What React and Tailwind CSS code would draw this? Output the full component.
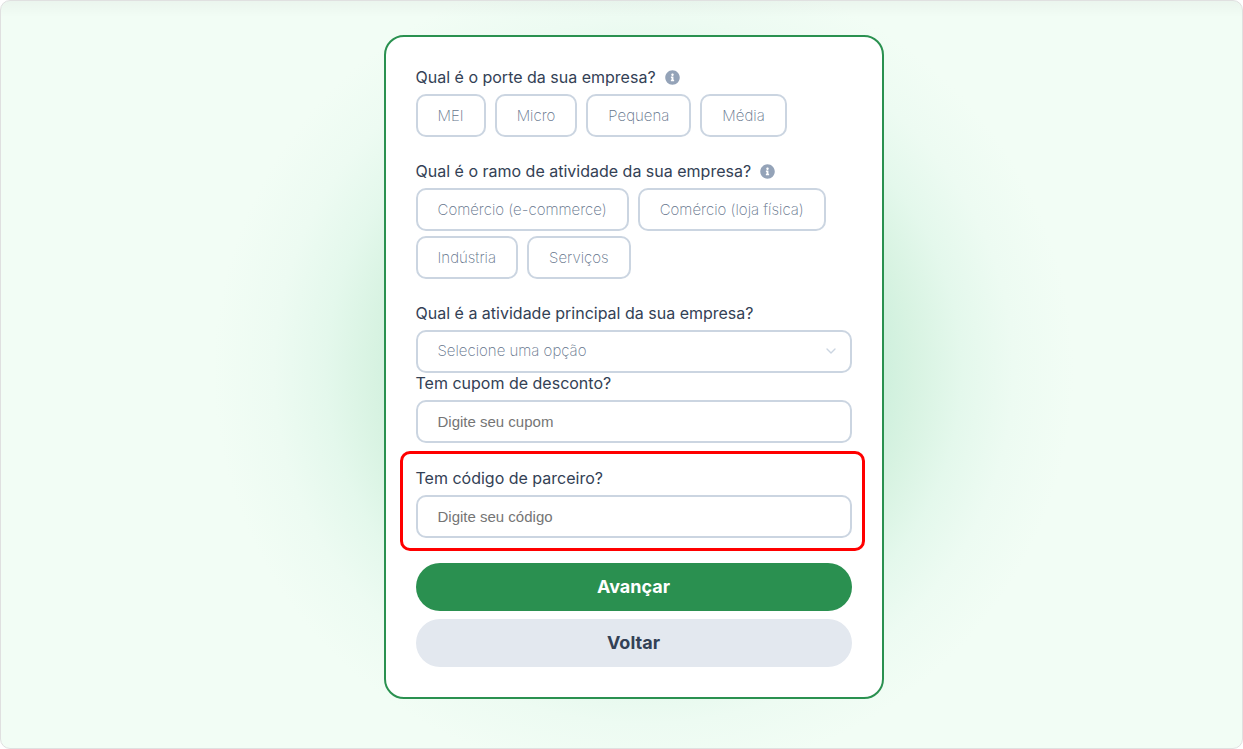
import { FaInfoCircle } from "react-icons/fa";
import { ChevronDown } from "lucide-react";

function Choices({ label, name, options }) {
  return (
    <fieldset className="mb-6">
      <legend className="mb-[7px] flex items-center gap-[9px] text-base leading-5">
        {label}
        <button type="button" aria-label="Mais informações" className="text-[#94a3b8]">
          <FaInfoCircle size={15} aria-hidden="true" />
        </button>
      </legend>
      <div className="flex flex-wrap gap-x-[9px] gap-y-[5px]">
        {options.map((option) => (
          <button
            key={option}
            type="button"
            name={name}
            className="h-[43px] rounded-[10px] border-2 border-[#cbd5e1] bg-white px-5 text-[15px] leading-5 font-extralight text-[#64748b]"
          >
            {option}
          </button>
        ))}
      </div>
    </fieldset>
  );
}

const controlClass =
  "block h-[43px] w-full rounded-[10px] border-2 border-[#cbd5e1] bg-white px-5 text-[15px]";

function TextField({ id, label, placeholder }) {
  return (
    <>
      <label htmlFor={id} className="mb-[7px] block text-base leading-5">
        {label}
      </label>
      <input
        id={id}
        type="text"
        placeholder={placeholder}
        className={`${controlClass} font-['Liberation_Sans',Arial,sans-serif] placeholder:text-[#757575]`}
      />
    </>
  );
}

export default function App() {
  return (
    <div className="bg-white font-['Inter',sans-serif] text-[#334155]">
      <main className="flex min-h-screen items-start justify-center rounded-[10px] border border-[#e0e0e0] bg-[#f2fdf5] bg-[linear-gradient(to_bottom,rgba(0,0,0,0.03),transparent_16px),radial-gradient(ellipse_430px_410px_at_calc(50%+22px)_370px,#bbebcd_0%,#cdefdc_54%,#d8f3e2_63%,#e4f8ec_74%,#edfbf2_86%,#f2fdf500_100%)] pt-[34px] pb-12 pl-6">
        <form className="w-full max-w-[500px] rounded-[20px] border-2 border-[#2a9150] bg-white p-[30px]">
          <Choices
            label="Qual é o porte da sua empresa?"
            name="porte"
            options={["MEI", "Micro", "Pequena", "Média"]}
          />
          <Choices
            label="Qual é o ramo de atividade da sua empresa?"
            name="ramo"
            options={["Comércio (e-commerce)", "Comércio (loja física)", "Indústria", "Serviços"]}
          />

          <label htmlFor="atividade" className="mb-[7px] block text-base leading-5">
            Qual é a atividade principal da sua empresa?
          </label>
          <div className="relative">
            <select
              id="atividade"
              className={`${controlClass} appearance-none font-extralight text-[#64748b]`}
            >
              <option>Selecione uma opção</option>
            </select>
            <ChevronDown
              size={16}
              className="pointer-events-none absolute top-[13px] right-[13px] text-[#cbd5e1]"
              aria-hidden="true"
            />
          </div>

          <TextField id="cupom" label="Tem cupom de desconto?" placeholder="Digite seu cupom" />

          <div className="relative my-[25px]">
            <TextField
              id="codigo"
              label="Tem código de parceiro?"
              placeholder="Digite seu código"
            />
            <span className="pointer-events-none absolute -top-[17px] -right-[13px] -bottom-[13px] -left-4 rounded-[10px] border-3 border-[#ff0000]" />
          </div>

          <div className="flex flex-col gap-2">
            <button type="submit" className="h-12 rounded-full bg-[#2a9050] text-lg font-bold text-white">
              Avançar
            </button>
            <button type="button" className="h-12 rounded-full bg-[#e3e8ef] text-lg font-bold">
              Voltar
            </button>
          </div>
        </form>
      </main>
    </div>
  );
}
